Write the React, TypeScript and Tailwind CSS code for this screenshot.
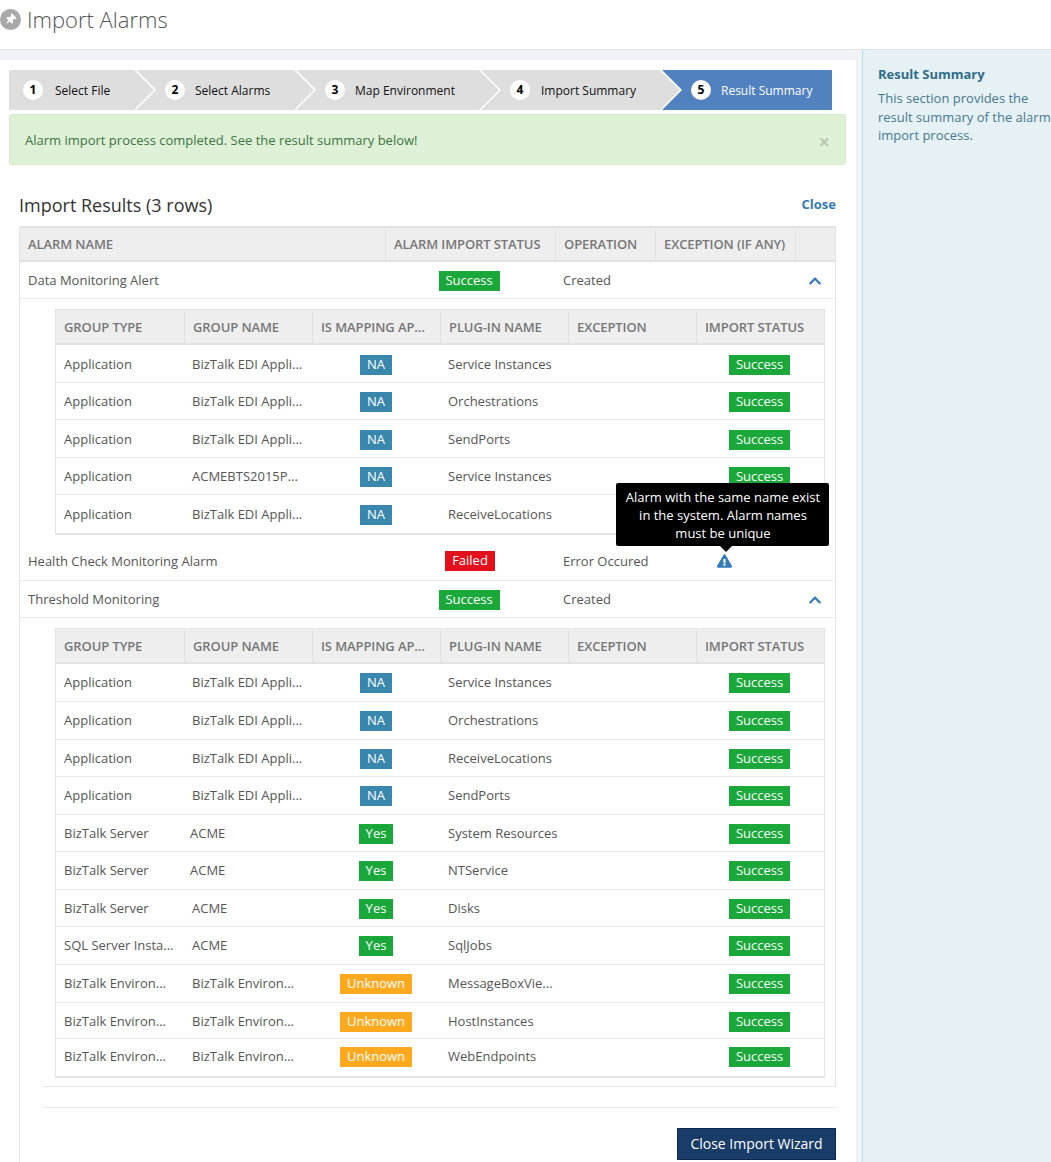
import type { ReactNode } from 'react';
import { FaChevronUp, FaExclamationTriangle, FaThumbtack } from 'react-icons/fa';

type Tone = 'success' | 'failed' | 'info' | 'warn';

const badgeTones: Record<Tone, string> = {
  success: 'bg-[#1aa83a]',
  failed: 'bg-[#e3101c]',
  info: 'bg-[#3a87ad]',
  warn: 'bg-[#ffa91f]',
};

function Badge({ tone, width, children }: { tone: Tone; width: string; children: string }) {
  return (
    <span className={`inline-flex h-[20px] items-center justify-center text-[13px] text-white ${badgeTones[tone]} ${width}`}>
      {children}
    </span>
  );
}

type MapState = 'NA' | 'Yes' | 'Unknown';

type SubRow = {
  type: string;
  name: string;
  map: MapState;
  plugin: string;
  height: string;
  nameClass?: string;
};

const firstRows: SubRow[] = [
  { type: 'Application', name: 'BizTalk EDI Appli...', map: 'NA', plugin: 'Service Instances', height: 'h-[38px] pt-[2px]' },
  { type: 'Application', name: 'BizTalk EDI Appli...', map: 'NA', plugin: 'Orchestrations', height: 'h-[37px] pt-[2px]' },
  { type: 'Application', name: 'BizTalk EDI Appli...', map: 'NA', plugin: 'SendPorts', height: 'h-[38px] pt-[2px]' },
  { type: 'Application', name: 'ACMEBTS2015P...', map: 'NA', plugin: 'Service Instances', height: 'h-[37px] pt-[2px]' },
  { type: 'Application', name: 'BizTalk EDI Appli...', map: 'NA', plugin: 'ReceiveLocations', height: 'h-[38px] pt-[2px]' },
];

const thirdRows: SubRow[] = [
  { type: 'Application', name: 'BizTalk EDI Appli...', map: 'NA', plugin: 'Service Instances', height: 'h-[38px]' },
  { type: 'Application', name: 'BizTalk EDI Appli...', map: 'NA', plugin: 'Orchestrations', height: 'h-[38px]' },
  { type: 'Application', name: 'BizTalk EDI Appli...', map: 'NA', plugin: 'ReceiveLocations', height: 'h-[37px] pt-[1px]' },
  { type: 'Application', name: 'BizTalk EDI Appli...', map: 'NA', plugin: 'SendPorts', height: 'h-[38px]' },
  { type: 'BizTalk Server', name: 'ACME', map: 'Yes', plugin: 'System Resources', height: 'h-[37px] pt-[1px]', nameClass: '-ml-[2px]' },
  { type: 'BizTalk Server', name: 'ACME', map: 'Yes', plugin: 'NTService', height: 'h-[38px]', nameClass: '-ml-[2px]' },
  { type: 'BizTalk Server', name: 'ACME', map: 'Yes', plugin: 'Disks', height: 'h-[37px] pt-[1px]' },
  { type: 'SQL Server Insta...', name: 'ACME', map: 'Yes', plugin: 'SqlJobs', height: 'h-[38px]' },
  { type: 'BizTalk Environ...', name: 'BizTalk Environ...', map: 'Unknown', plugin: 'MessageBoxVie...', height: 'h-[38px]' },
  { type: 'BizTalk Environ...', name: 'BizTalk Environ...', map: 'Unknown', plugin: 'HostInstances', height: 'h-[36px] pt-[2px]' },
  { type: 'BizTalk Environ...', name: 'BizTalk Environ...', map: 'Unknown', plugin: 'WebEndpoints', height: 'h-[37px] pb-[1px]' },
];

const steps = [
  { n: 1, label: 'Select File', box: 'w-[145px] pl-[14px]', gap: 'mr-[12px]', first: true },
  { n: 2, label: 'Select Alarms', box: 'w-[178px] -ml-[18px] pl-[29px]', gap: 'mr-[10px]' },
  { n: 3, label: 'Map Environment', box: 'w-[203px] -ml-[18px] pl-[29px]', gap: 'mr-[10px]' },
  { n: 4, label: 'Import Summary', box: 'w-[199px] -ml-[18px] pl-[29px]', gap: 'mr-[11px]' },
  { n: 5, label: 'Result Summary', box: 'w-[170px] -ml-[18px] pl-[29px]', gap: 'mr-[10px]', active: true },
];

const subGrid = 'grid grid-cols-[129px_128px_128px_128px_128px_1fr]';
const mainGrid = 'grid grid-cols-[366px_170px_100px_140px_1fr]';

function Stepper() {
  return (
    <div className="flex h-[40px] w-[823px]">
      {steps.map((s) => (
        <div
          key={s.n}
          className={`flex h-full shrink-0 items-center text-[12px] ${s.box} ${
            s.active ? 'bg-[#5181bf] text-white [clip-path:polygon(0_0,100%_0,100%_100%,0_100%,20px_50%)]' : 'bg-[#dedede] text-[#111]'
          } ${s.first ? '[clip-path:polygon(0_0,calc(100%-20px)_0,100%_50%,calc(100%-20px)_100%,0_100%)]' : ''} ${
            !s.first && !s.active ? '[clip-path:polygon(0_0,calc(100%-20px)_0,100%_50%,calc(100%-20px)_100%,0_100%,20px_50%)]' : ''
          }`}
        >
          <span className={`flex h-[20px] w-[20px] items-center justify-center rounded-full bg-white text-[12px] font-bold text-black ${s.gap}`}>
            {s.n}
          </span>
          <span className="pt-[1px]">{s.label}</span>
        </div>
      ))}
    </div>
  );
}

function HeaderCell({ label, last }: { label: string; last?: boolean }) {
  return (
    <div className={`flex items-center overflow-hidden whitespace-nowrap pl-[8px] text-[13px] font-semibold tracking-[-0.1px] text-[#777] ${last ? '' : 'border-r border-[#e2e2e2]'}`}>
      {label}
    </div>
  );
}

function MapBadge({ state }: { state: MapState }) {
  if (state === 'Yes') return <Badge tone="success" width="w-[34px]">Yes</Badge>;
  if (state === 'Unknown') return <Badge tone="warn" width="w-[72px]">Unknown</Badge>;
  return <Badge tone="info" width="w-[32px]">NA</Badge>;
}

function SubTable({ rows }: { rows: SubRow[] }) {
  return (
    <div className="w-[770px] border border-b-2 border-[#e4e4e4]">
      <div className={`${subGrid} h-[35px] border-b-2 border-[#e2e2e2] bg-[#eeeeee] pt-[2px]`}>
        <HeaderCell label="GROUP TYPE" />
        <HeaderCell label="GROUP NAME" />
        <HeaderCell label="IS MAPPING AP..." />
        <HeaderCell label="PLUG-IN NAME" />
        <HeaderCell label="EXCEPTION" />
        <HeaderCell label="IMPORT STATUS" last />
      </div>
      {rows.map((r, i) => (
        <div
          key={i}
          className={`${subGrid} ${r.height} items-center text-[13px] text-[#555] ${i < rows.length - 1 ? 'border-b border-[#ececec]' : ''}`}
        >
          <div className="whitespace-nowrap pl-[8px]">{r.type}</div>
          <div className={`whitespace-nowrap pl-[7px] ${r.nameClass ?? ''}`}>{r.name}</div>
          <div className="flex justify-center pr-[2px]">
            <MapBadge state={r.map} />
          </div>
          <div className="whitespace-nowrap pl-[7px]">{r.plugin}</div>
          <div />
          <div className="flex justify-center pr-[2px]">
            <Badge tone="success" width="w-[61px]">Success</Badge>
          </div>
        </div>
      ))}
    </div>
  );
}

function AlarmRow({
  name,
  status,
  operation,
  height,
  children,
}: {
  name: string;
  status: 'ok' | 'fail';
  operation: string;
  height: string;
  children?: ReactNode;
}) {
  return (
    <div className={`${mainGrid} ${height} items-center border-b border-[#ececec] text-[13px] text-[#555]`}>
      <div className="pl-[8px]">{name}</div>
      <div className="flex justify-center">
        {status === 'ok' ? (
          <span className="pr-[4px]">
            <Badge tone="success" width="w-[61px]">Success</Badge>
          </span>
        ) : (
          <span className="mb-[2px] pr-[2px]">
            <Badge tone="failed" width="w-[50px]">Failed</Badge>
          </span>
        )}
      </div>
      <div className="pl-[7px]">{operation}</div>
      {children}
    </div>
  );
}

function Chevron() {
  return (
    <>
      <div />
      <div className="flex justify-center pr-[2px]">
        <FaChevronUp className="h-[14px] w-[14px] text-[#337ab7]" />
      </div>
    </>
  );
}

export default function App() {
  return (
    <div className="h-[1162px] w-[1051px] overflow-hidden bg-white font-['Open_Sans',sans-serif]">
      <header className="flex h-[50px] items-center gap-[6px] border-b border-[#e0e2e5] pb-[11px]">
        <span className="flex h-[21px] w-[21px] items-center justify-center rounded-full bg-[#a9a9a9]">
          <FaThumbtack className="h-[11px] w-[11px] rotate-45 text-white" />
        </span>
        <h1 className="text-[22px] font-light text-[#555]">Import Alarms</h1>
      </header>

      <div className="flex h-[1112px]">
        <div className="h-full w-[862px] shrink-0 bg-[#f0f2f5] pt-[10px]">
          <div className="h-full w-[856px] bg-white pl-[9px] pt-[10px]">
            <Stepper />

            <div className="mt-[4px] flex h-[51px] w-[837px] items-center justify-between rounded-[3px] border border-[#d6e9c6] bg-[#dff0d8] pl-[15px] pr-[15px] text-[13px] text-[#3c763d]">
              <span className="pt-[2px]">Alarm import process completed. See the result summary below!</span>
              <span className="pt-[4px] text-[20px] font-bold leading-none text-[#b9c9b2]">×</span>
            </div>

            <div className="ml-[10px] mt-[27px] flex w-[817px] items-center justify-between pb-[7px]">
              <h2 className="text-[18px] leading-[27px] text-[#333]">Import Results (3 rows)</h2>
              <a className="mb-[2px] text-[13px] font-bold text-[#337ab7]">Close</a>
            </div>

            <div className="ml-[10px] h-[940px] w-[817px] border-l border-[#e4e4e4]">
              <div className="w-[816px] border-r border-[#e4e4e4]">
                <div className={`${mainGrid} h-[36px] border-y-2 border-[#e2e2e2] bg-[#eeeeee] pt-[2px]`}>
                  <HeaderCell label="ALARM NAME" />
                  <HeaderCell label="ALARM IMPORT STATUS" />
                  <HeaderCell label="OPERATION" />
                  <HeaderCell label="EXCEPTION (IF ANY)" />
                  <HeaderCell label="" last />
                </div>

                <AlarmRow name="Data Monitoring Alert" status="ok" operation="Created" height="h-[37px] pt-[2px]">
                  <Chevron />
                </AlarmRow>
                <div className="pb-[8px] pl-[35px] pt-[10px]">
                  <SubTable rows={firstRows} />
                </div>

                <AlarmRow name="Health Check Monitoring Alarm" status="fail" operation="Error Occured" height="h-[38px]">
                  <div className="relative -mt-[2px] flex justify-center pr-[4px]">
                    <FaExclamationTriangle className="h-[14px] w-[15px] text-[#337ab7]" />
                    <div className="absolute bottom-[22px] left-[-40px] w-[213px] rounded-[2px] bg-black pb-[4px] pl-[9px] pr-[8px] pt-[5px] text-center text-[13px] leading-[18px] text-white">
                      Alarm with the same name exist in the system. Alarm names must be unique
                      <span className="absolute bottom-[-6px] left-[104px] h-0 w-0 border-x-[6px] border-t-[6px] border-x-transparent border-t-black" />
                    </div>
                  </div>
                  <div />
                </AlarmRow>

                <AlarmRow name="Threshold Monitoring" status="ok" operation="Created" height="h-[37px] pt-[2px]">
                  <Chevron />
                </AlarmRow>
                <div className="pb-[8px] pl-[35px] pt-[10px]">
                  <SubTable rows={thirdRows} />
                </div>
              </div>

              <div className="ml-[23px] w-[793px]">
                <div className="border-t border-[#e4e4e4]" />
                <div className="mt-[20px] border-t border-[#ececec]" />
                <div className="mt-[20px] flex justify-end">
                  <button className="h-[32px] w-[159px] border border-[#10294a] bg-[#1a3c68] pb-[2px] text-[14px] text-white">
                    Close Import Wizard
                  </button>
                </div>
              </div>
            </div>
          </div>
        </div>

        <aside className="h-full flex-1 border-l border-[#b9dbe3] bg-[#e6f1f6] pl-[15px] pt-[14px] text-[13px] text-[#48798f]">
          <h3 className="text-[13px] font-bold leading-[20px] text-[#2f6d88]">Result Summary</h3>
          <p className="mt-[5px] whitespace-nowrap leading-[18.5px]">
            This section provides the
            <br />
            result summary of the alarm
            <br />
            import process.
          </p>
        </aside>
      </div>
    </div>
  );
}
